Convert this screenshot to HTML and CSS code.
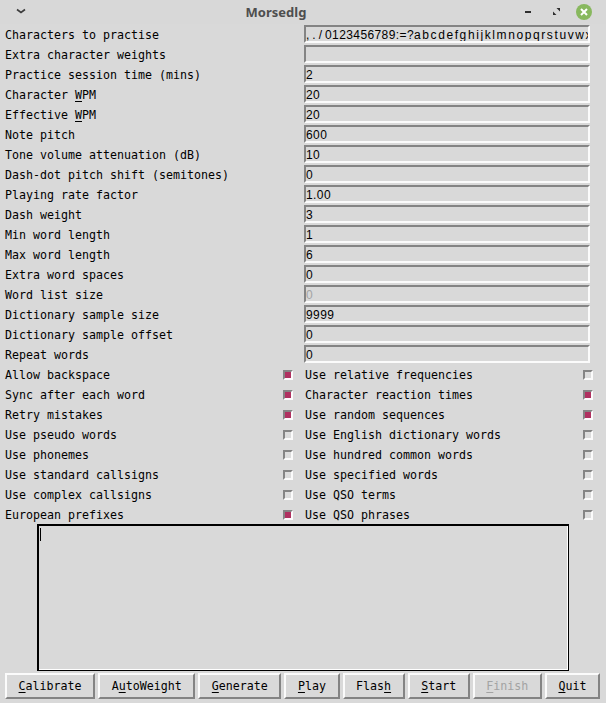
FILE: index.html
```
<!DOCTYPE html>
<html>
<head>
<meta charset="utf-8">
<title>Morsedlg</title>
<link rel="stylesheet" href="styles.css">
</head>
<body>
<div class="win">
  <div class="titlebar">
    <div class="tb-left">
      <svg class="chev" width="12" height="8" viewBox="0 0 12 8"><path d="M2 2.5 L6 5.5 L10 2.5" fill="none" stroke="#3c3c3c" stroke-width="1.6"/></svg>
    </div>
    <div class="tb-title">Morsedlg</div>
    <div class="tb-right">
      <svg width="6" height="10" viewBox="0 0 6 10"><rect x="0" y="4" width="6" height="2" fill="#2e2e2e"/></svg>
      <svg width="7" height="7" viewBox="0 0 7 7"><path d="M3.5 0 H7 V3.5 Z M0 3.5 V7 H3.5 Z" fill="#2e2e2e"/></svg>
      <svg width="18" height="18" viewBox="0 0 18 18"><circle cx="9" cy="9" r="8" fill="#88b85e"/><path d="M6 6 L12 12 M12 6 L6 12" stroke="#fff" stroke-width="2"/></svg>
    </div>
  </div>

  <div class="form">
    <div class="lbl">Characters to practise</div><div class="entry"><span class="sp-a">,./</span>0123456789:=?<span class="sp-b">abcdefghijklmnopqrstuvwxyz</span></div>
    <div class="lbl">Extra character weights</div><div class="entry"></div>
    <div class="lbl">Practice session time (mins)</div><div class="entry">2</div>
    <div class="lbl">Character <u>W</u>PM</div><div class="entry">20</div>
    <div class="lbl">Effective <u>W</u>PM</div><div class="entry">20</div>
    <div class="lbl">Note pitch</div><div class="entry">600</div>
    <div class="lbl">Tone volume attenuation (dB)</div><div class="entry">10</div>
    <div class="lbl">Dash-dot pitch shift (semitones)</div><div class="entry">0</div>
    <div class="lbl">Playing rate factor</div><div class="entry">1.00</div>
    <div class="lbl">Dash weight</div><div class="entry">3</div>
    <div class="lbl">Min word length</div><div class="entry">1</div>
    <div class="lbl">Max word length</div><div class="entry">6</div>
    <div class="lbl">Extra word spaces</div><div class="entry">0</div>
    <div class="lbl">Word list size</div><div class="entry disabled">0</div>
    <div class="lbl">Dictionary sample size</div><div class="entry">9999</div>
    <div class="lbl">Dictionary sample offset</div><div class="entry">0</div>
    <div class="lbl">Repeat words</div><div class="entry">0</div>
  </div>

  <div class="checks">
    <div class="chk"><span class="ct">Allow backspace</span><span class="box on"></span></div>
    <div class="chk"><span class="ct">Use relative frequencies</span><span class="box"></span></div>
    <div class="chk"><span class="ct">Sync after each word</span><span class="box on"></span></div>
    <div class="chk"><span class="ct">Character reaction times</span><span class="box on"></span></div>
    <div class="chk"><span class="ct">Retry mistakes</span><span class="box on"></span></div>
    <div class="chk"><span class="ct">Use random sequences</span><span class="box on"></span></div>
    <div class="chk"><span class="ct">Use pseudo words</span><span class="box"></span></div>
    <div class="chk"><span class="ct">Use English dictionary words</span><span class="box"></span></div>
    <div class="chk"><span class="ct">Use phonemes</span><span class="box"></span></div>
    <div class="chk"><span class="ct">Use hundred common words</span><span class="box"></span></div>
    <div class="chk"><span class="ct">Use standard callsigns</span><span class="box"></span></div>
    <div class="chk"><span class="ct">Use specified words</span><span class="box"></span></div>
    <div class="chk"><span class="ct">Use complex callsigns</span><span class="box"></span></div>
    <div class="chk"><span class="ct">Use QSO terms</span><span class="box"></span></div>
    <div class="chk"><span class="ct">European prefixes</span><span class="box on"></span></div>
    <div class="chk"><span class="ct">Use QSO phrases</span><span class="box"></span></div>
  </div>

  <div class="textarea"><span class="cursor"></span></div>

  <div class="buttons">
    <div class="btn"><u>C</u>alibrate</div>
    <div class="btn">A<u>u</u>toWeight</div>
    <div class="btn"><u>G</u>enerate</div>
    <div class="btn"><u>P</u>lay</div>
    <div class="btn">Flas<u>h</u></div>
    <div class="btn"><u>S</u>tart</div>
    <div class="btn disabled"><u>F</u>inish</div>
    <div class="btn"><u>Q</u>uit</div>
  </div>
</div>
</body>
</html>
```

FILE: styles.css
```
html, body {
  margin: 0;
  padding: 0;
  background: #d9d9d9;
}
.win {
  width: 606px;
  height: 703px;
  background: #d9d9d9;
  font-family: "DejaVu Sans Mono", "Liberation Mono", monospace;
  font-size: 11.63px;
  color: #000;
  overflow: hidden;
}
.titlebar {
  height: 24px;
  display: grid;
  grid-template-columns: 38px 1fr 92px;
  align-items: center;
  background: #d8d8d8;
}
.tb-left {
  display: flex;
  justify-content: flex-start;
  padding-left: 15px;
  margin-top: -3px;
}
.tb-title {
  text-align: center;
  font-family: "Noto Sans", "DejaVu Sans", sans-serif;
  font-weight: bold;
  font-size: 13px;
  color: #4e4e4e;
}
.tb-right {
  display: flex;
  align-items: center;
  padding-left: 11px;
}
.tb-right svg:nth-child(2) {
  margin-left: 22px;
  margin-top: -1px;
}
.tb-right svg:nth-child(3) {
  margin-left: 15px;
}
.form {
  display: grid;
  grid-template-columns: 299px 286px;
  grid-auto-rows: 20px;
  padding-left: 5px;
}
.lbl {
  padding-top: 2px;
  line-height: 18px;
  white-space: nowrap;
}
.entry {
  margin-top: 1px;
  height: 18px;
  box-sizing: border-box;
  border: 2px solid;
  border-color: #848484 #fbfbfb #fbfbfb #848484;
  font-family: "Liberation Sans", Arial, sans-serif;
  font-size: 12px;
  letter-spacing: 0.4px;
  line-height: 16px;
  white-space: nowrap;
  overflow: hidden;
}
.sp-a {
  letter-spacing: 3px;
}
.sp-b {
  letter-spacing: 1.6px;
}
.entry.disabled {
  color: #a3a3a3;
}
.checks {
  display: grid;
  grid-template-columns: 300px 300px;
  grid-auto-rows: 20px;
  padding-left: 5px;
}
.chk {
  display: flex;
  align-items: center;
  justify-content: space-between;
  padding-right: 12px;
  white-space: nowrap;
}
.ct {
  padding-top: 2px;
  line-height: 18px;
}
.box {
  width: 10px;
  height: 10px;
  box-sizing: border-box;
  border: 2px solid;
  border-color: #848484 #fbfbfb #fbfbfb #848484;
  background: #dcdcdc;
  margin-top: 1px;
}
.box.on {
  background: #b03060;
}
.textarea {
  width: 532px;
  height: 147px;
  box-sizing: border-box;
  margin-left: 37px;
  border: 1px solid #000;
  box-shadow: inset 1px 1px 0 #000, inset -1px -1px 0 #fff;
  padding: 3px 0 0 2px;
}
.cursor {
  display: block;
  width: 1px;
  height: 13px;
  background: #000;
}
.buttons {
  display: flex;
  gap: 3px;
  margin-top: 2px;
  padding: 0 6px 0 5px;
}
.btn {
  flex: 1 1 auto;
  height: 26px;
  box-sizing: border-box;
  border: 2px solid;
  border-color: #fbfbfb #838383 #838383 #fbfbfb;
  padding: 0 11px;
  text-align: center;
  line-height: 23px;
  white-space: nowrap;
}
.btn.disabled {
  color: #a3a3a3;
}
u {
  text-decoration: underline;
  text-underline-offset: 2px;
}
```
